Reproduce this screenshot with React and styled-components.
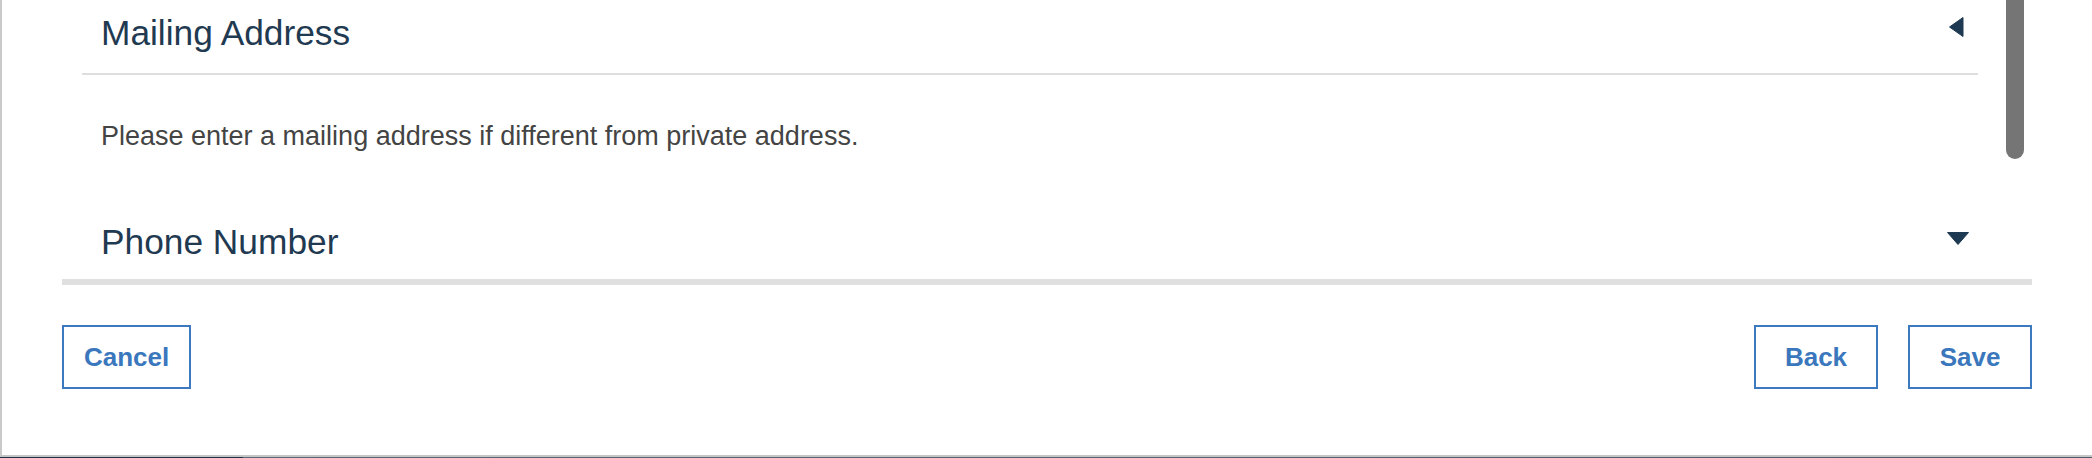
import React from "react";
import styled, { createGlobalStyle } from "styled-components";

const GlobalStyle = createGlobalStyle`
  html, body {
    margin: 0;
    padding: 0;
    background: #ffffff;
  }
  body {
    font-family: "Liberation Sans", Helvetica, Arial, sans-serif;
    -webkit-font-smoothing: antialiased;
  }
  * { box-sizing: border-box; }
`;

const Frame = styled.div`
  width: 2092px;
  height: 458px;
  display: flex;
  flex-direction: column;
`;

const Page = styled.div`
  height: 457px;
  border-left: 2px solid #c9c9c9;
  border-bottom: 2px solid #c6c6c6;
  padding-left: 60px;
  background: #ffffff;
`;

const BottomEdge = styled.div`
  height: 1px;
  background: linear-gradient(to right, #1e3345 0, #1e3345 243px, #5b6874 243px, #4f5d6a 100%);
`;

const Panel = styled.div`
  width: 1970px;
  display: flex;
  flex-direction: column;
`;

const ScrollArea = styled.div`
  position: relative;
  height: 285px;
  overflow: hidden;
  border-bottom: 6px solid #e0e0e0;
  padding: 0 54px 0 20px;
`;

const ScrollThumb = styled.div`
  position: absolute;
  top: -40px;
  right: 8px;
  width: 18px;
  height: 199px;
  border-radius: 9px;
  background: #757575;
`;

const Section = styled.section`
  display: flex;
  flex-direction: column;
`;

const SectionHeader = styled.div`
  display: flex;
  align-items: flex-start;
  justify-content: space-between;
  padding: 13px 8px 20px 19px;
  border-bottom: ${(p) => (p.$open ? "2px solid #dedede" : "none")};
`;

const SectionTitle = styled.h2`
  margin: 0;
  font-size: 35.3px;
  line-height: 40px;
  font-weight: 400;
  color: #1f3a51;
`;

const CaretSlot = styled.span`
  display: flex;
  width: 24px;
  height: 28px;
  color: #1e3a52;
`;

const SectionBody = styled.div`
  padding: 46px 19px 58px;
`;

const BodyText = styled.p`
  margin: 0;
  font-size: 27px;
  line-height: 30px;
  color: #444444;
`;

const ButtonBar = styled.div`
  display: flex;
  justify-content: space-between;
  margin-top: 40px;
`;

const ButtonGroup = styled.div`
  display: flex;
  gap: 30px;
`;

const OutlineButton = styled.button`
  height: 64px;
  min-width: 124px;
  padding: 0 20px;
  border: 2px solid #3d79be;
  border-radius: 0;
  background: #ffffff;
  color: #3b77bc;
  font-family: "Liberation Sans", Helvetica, Arial, sans-serif;
  font-size: 26px;
  font-weight: 700;
  cursor: pointer;
`;

const Caret = ({ open }) => (
  <CaretSlot>
    <svg width="24" height="28" viewBox="0 0 24 28" aria-hidden="true">
      {open ? (
        <polygon
          points="17,4.5 17,23.5 3.5,14"
          fill="currentColor"
          stroke="currentColor"
          strokeWidth="1"
          strokeLinejoin="round"
        />
      ) : (
        <polygon
          points="1.5,10.5 22.5,10.5 12,22.5"
          fill="currentColor"
          stroke="currentColor"
          strokeWidth="1"
          strokeLinejoin="round"
        />
      )}
    </svg>
  </CaretSlot>
);

const AccordionSection = ({ title, open, children }) => (
  <Section>
    <SectionHeader $open={open}>
      <SectionTitle>{title}</SectionTitle>
      <Caret open={open} />
    </SectionHeader>
    {open && <SectionBody>{children}</SectionBody>}
  </Section>
);

export default function App() {
  return (
    <>
      <GlobalStyle />
      <Frame>
        <Page>
          <Panel>
            <ScrollArea>
              <AccordionSection title="Mailing Address" open>
                <BodyText>
                  Please enter a mailing address if different from private address.
                </BodyText>
              </AccordionSection>
              <AccordionSection title="Phone Number" open={false} />
              <ScrollThumb />
            </ScrollArea>
            <ButtonBar>
              <OutlineButton>Cancel</OutlineButton>
              <ButtonGroup>
                <OutlineButton>Back</OutlineButton>
                <OutlineButton>Save</OutlineButton>
              </ButtonGroup>
            </ButtonBar>
          </Panel>
        </Page>
        <BottomEdge />
      </Frame>
    </>
  );
}
